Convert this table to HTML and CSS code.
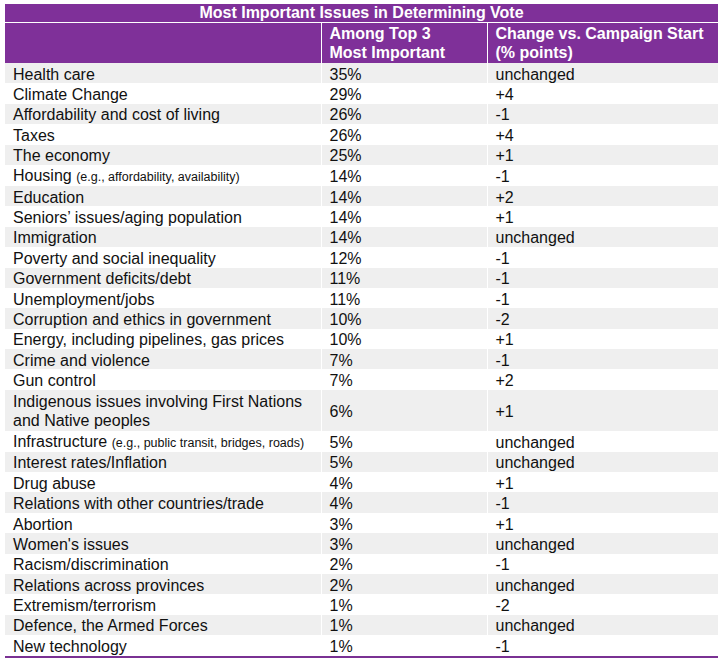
FILE: index.html
```html
<!DOCTYPE html>
<html>
<head>
<meta charset="utf-8">
<link rel="stylesheet" href="styles.css">
</head>
<body>
<table class="issues">
  <colgroup><col class="c1"><col class="c2"><col class="c3"></colgroup>
  <thead>
    <tr class="title"><th colspan="3">Most Important Issues in Determining Vote</th></tr>
    <tr class="head"><th></th><th>Among Top 3<br>Most Important</th><th>Change vs. Campaign Start<br>(% points)</th></tr>
  </thead>
  <tbody>
    <tr><td>Health care</td><td>35%</td><td>unchanged</td></tr>
    <tr><td>Climate Change</td><td>29%</td><td>+4</td></tr>
    <tr><td>Affordability and cost of living</td><td>26%</td><td>-1</td></tr>
    <tr><td>Taxes</td><td>26%</td><td>+4</td></tr>
    <tr><td>The economy</td><td>25%</td><td>+1</td></tr>
    <tr><td>Housing <span class="note">(e.g., affordability, availability)</span></td><td>14%</td><td>-1</td></tr>
    <tr><td>Education</td><td>14%</td><td>+2</td></tr>
    <tr><td>Seniors’ issues/aging population</td><td>14%</td><td>+1</td></tr>
    <tr><td>Immigration</td><td>14%</td><td>unchanged</td></tr>
    <tr><td>Poverty and social inequality</td><td>12%</td><td>-1</td></tr>
    <tr><td>Government deficits/debt</td><td>11%</td><td>-1</td></tr>
    <tr><td>Unemployment/jobs</td><td>11%</td><td>-1</td></tr>
    <tr><td>Corruption and ethics in government</td><td>10%</td><td>-2</td></tr>
    <tr><td>Energy, including pipelines, gas prices</td><td>10%</td><td>+1</td></tr>
    <tr><td>Crime and violence</td><td>7%</td><td>-1</td></tr>
    <tr><td>Gun control</td><td>7%</td><td>+2</td></tr>
    <tr class="tall"><td>Indigenous issues involving First Nations<br>and Native peoples</td><td>6%</td><td>+1</td></tr>
    <tr><td>Infrastructure <span class="note">(e.g., public transit, bridges, roads)</span></td><td>5%</td><td>unchanged</td></tr>
    <tr><td>Interest rates/Inflation</td><td>5%</td><td>unchanged</td></tr>
    <tr><td>Drug abuse</td><td>4%</td><td>+1</td></tr>
    <tr><td>Relations with other countries/trade</td><td>4%</td><td>-1</td></tr>
    <tr><td>Abortion</td><td>3%</td><td>+1</td></tr>
    <tr><td>Women's issues</td><td>3%</td><td>unchanged</td></tr>
    <tr><td>Racism/discrimination</td><td>2%</td><td>-1</td></tr>
    <tr><td>Relations across provinces</td><td>2%</td><td>unchanged</td></tr>
    <tr><td>Extremism/terrorism</td><td>1%</td><td>-2</td></tr>
    <tr><td>Defence, the Armed Forces</td><td>1%</td><td>unchanged</td></tr>
    <tr><td>New technology</td><td>1%</td><td>-1</td></tr>
  </tbody>
</table>
</body>
</html>
```
FILE: styles.css
```css
html, body {
  margin: 0;
  padding: 0;
  background: #ffffff;
}
body {
  padding: 4px 0 0 5px;
  font-family: "Liberation Sans", Arial, sans-serif;
  color: #111111;
}
.issues {
  border-collapse: collapse;
  table-layout: fixed;
  width: 713px;
  border-bottom: 2px solid #7a3193;
}
.c1 { width: 316px; }
.c2 { width: 166px; }
.c3 { width: 231px; }
.issues th, .issues td {
  padding: 0;
  border-left: 1px solid #ffffff;
  text-align: left;
  vertical-align: middle;
  overflow: hidden;
  white-space: nowrap;
}
.issues th:first-child, .issues td:first-child {
  border-left: none;
}
.title th {
  background: #7f3099;
  color: #ffffff;
  font-size: 16px;
  font-weight: bold;
  text-align: center;
  height: 18px;
  line-height: 18px;
  border-bottom: 1px solid #ffffff;
}
.head th {
  background: #7f3099;
  color: #ffffff;
  font-size: 16px;
  font-weight: bold;
  height: 40px;
  line-height: 19px;
  padding-left: 8px;
}
.head th:first-child { padding-left: 0; }
.issues td {
  font-size: 16px;
  height: 18.4px;
  line-height: 17px;
  padding-top: 2px;
  padding-left: 8px;
}
.issues td:first-child { padding-left: 8px; }
.issues tbody tr:nth-child(odd) td { background: #efefef; }
.issues tbody tr:nth-child(even) td { background: #ffffff; }
.issues tr.tall td { height: 38.8px; line-height: 19px; }
.note { font-size: 12.5px; }
```
